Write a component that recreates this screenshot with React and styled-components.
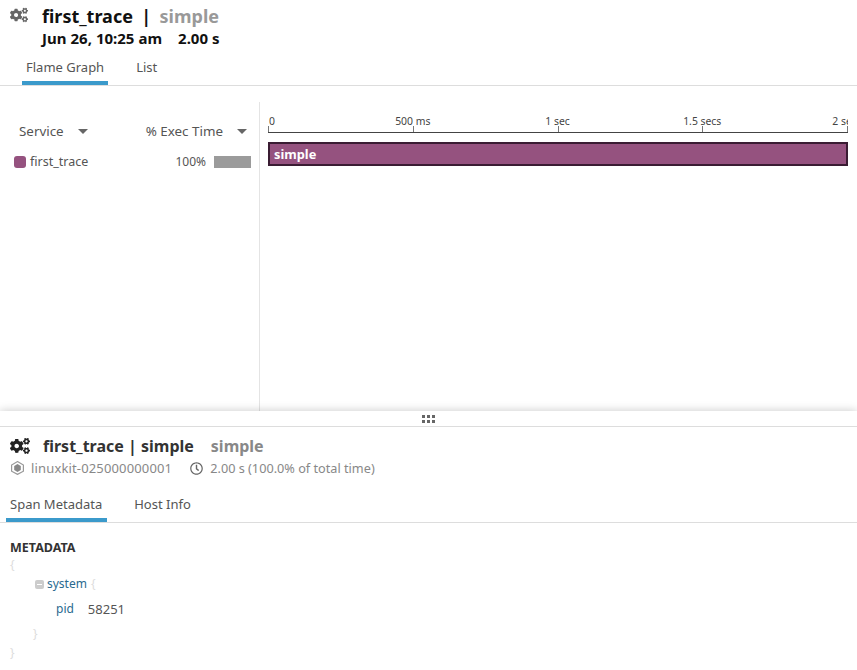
import React from 'react';
import styled, { createGlobalStyle } from 'styled-components';
import { FaCogs, FaRegClock } from 'react-icons/fa';

const GlobalStyle = createGlobalStyle`
    html, body { margin: 0; padding: 0; background: #fff; }
    body { font-family: "Noto Sans", "Open Sans", sans-serif; color: #333; overflow: hidden; }
`;

const Page = styled.div`
    width: 857px;
    height: 670px;
    display: flex;
    flex-direction: column;
    overflow: hidden;
`;
const Header = styled.header`
    height: 85px;
    flex: none;
    border-bottom: 1px solid #ddd;
    display: flex;
    flex-direction: column;
`;
const TitleBlock = styled.div`
    display: flex;
    padding: 6px 0 0 10px;
    height: 47px;
    box-sizing: border-box;
`;
const TopCogs = styled(FaCogs)`
    width: 18px;
    height: 18px;
    margin: 0 14px 0 0;
    color: #666;
    flex: none;
`;
const Titles = styled.div`
    display: flex;
    flex-direction: column;
`;
const TraceName = styled.div`
    font-size: 18px;
    line-height: 20px;
    font-weight: 700;
    color: #111;
    white-space: pre;
    word-spacing: -0.5px;
`;
const Muted = styled.span`
    color: #999;
`;
const TraceMeta = styled.div`
    font-size: 15px;
    line-height: 20px;
    margin-top: 2px;
    font-weight: 700;
    color: #111;
    white-space: pre;
    word-spacing: 0.1px;
`;
const Tabs = styled.nav`
    display: flex;
    padding-left: ${(p) => p.$inset}px;
    gap: ${(p) => p.$gap}px;
    margin-top: auto;
`;
const Tab = styled.div`
    font-size: 13px;
    line-height: 18px;
    height: 18px;
    color: #555;
    padding: 0 ${(p) => p.$padRight || 4}px 5px 4px;
    border-bottom: 4px solid ${(p) => (p.$active ? '#3b9acb' : 'transparent')};
`;
const Body = styled.section`
    flex: 1;
    display: flex;
    padding-top: 16px;
    overflow: hidden;
`;
const Sidebar = styled.aside`
    width: 259px;
    flex: none;
    border-right: 1px solid #e4e4e4;
    padding-top: 19px;
`;
const SideHead = styled.div`
    display: flex;
    align-items: center;
    height: 20px;
    font-size: 13.4px;
    color: #555;
    padding-left: 19px;
`;
const Caret = styled.span`
    width: 0;
    height: 0;
    border-left: 5px solid transparent;
    border-right: 5px solid transparent;
    border-top: 5px solid #666;
    margin-left: ${(p) => p.$gap}px;
`;
const ExecHead = styled.span`
    margin-left: ${(p) => p.$gap}px;
`;
const ServiceRow = styled.div`
    display: flex;
    align-items: center;
    height: 20px;
    margin-top: 10px;
    padding-left: 14px;
    font-size: 12.5px;
    color: #555;
`;
const Swatch = styled.span`
    width: 12px;
    height: 12px;
    border-radius: 3px;
    background: #95527f;
    margin: 2px 4px 0 0;
`;
const Percent = styled.span`
    margin-left: auto;
    margin-right: 8px;
    font-size: 12px;
`;
const ExecBar = styled.span`
    width: 37px;
    height: 12px;
    background: #9b9b9b;
    margin: 2px 8px 0 0;
`;
const Timeline = styled.div`
    flex: 1;
    padding: 10px 0 0 8px;
    overflow: hidden;
`;
const Ruler = styled.div`
    display: grid;
    grid-template-columns: repeat(5, 144.75px);
    width: 580px;
    height: 20px;
    border-bottom: 1px solid #444;
    overflow: hidden;
`;
const Tick = styled.div`
    display: flex;
    flex-direction: column;
    height: 20px;
    width: 0;
    position: relative;
    &::after {
        content: '';
        position: absolute;
        left: 0;
        bottom: 0;
        height: 6px;
        border-left: 1px solid #777;
    }
`;
const TickLabel = styled.span`
    font-size: 10.4px;
    line-height: 14px;
    margin-top: 2px;
    color: #444;
    white-space: nowrap;
    transform: ${(p) => (p.$first ? 'translateX(1px)' : 'translateX(-50%)')};
    width: max-content;
`;
const Span = styled.div`
    width: 580px;
    height: 24px;
    margin-top: 9px;
    box-sizing: border-box;
    background: #95527f;
    border: 2px solid #3a1c33;
    color: #fff;
    font-size: 12.8px;
    font-weight: 700;
    line-height: 20px;
    padding-left: 4px;
`;
const Detail = styled.section`
    height: 259px;
    flex: none;
    background: #fff;
    box-shadow: 0 0 9px rgba(0, 0, 0, 0.22);
    position: relative;
    display: flex;
    flex-direction: column;
`;
const Handle = styled.div`
    height: 15px;
    flex: none;
    border-bottom: 1px solid #ddd;
    display: flex;
    align-items: center;
    justify-content: center;
`;
const HandleDots = styled.div`
    display: grid;
    grid-template-columns: repeat(3, 3px);
    gap: 2px;
`;
const Dot = styled.span`
    width: 3px;
    height: 3px;
    background: #666;
`;
const SpanTitle = styled.div`
    display: flex;
    align-items: center;
    padding: 8px 0 0 10px;
    height: 22px;
`;
const DetailCogs = styled(FaCogs)`
    width: 20px;
    height: 20px;
    color: #222;
    margin-right: 13px;
    flex: none;
`;
const SpanName = styled.span`
    font-size: 16px;
    font-weight: 700;
    color: #333;
`;
const SpanResource = styled.span`
    font-size: 16px;
    font-weight: 700;
    color: #888;
    margin-left: 17px;
`;
const InfoRow = styled.div`
    display: flex;
    align-items: center;
    height: 18px;
    margin-top: 2px;
    padding-left: 11px;
    font-size: 12.7px;
    color: #888;
`;
const HostName = styled.span`
    font-size: 13px;
    letter-spacing: 0.15px;
`;
const HexIcon = styled.svg`
    width: 13px;
    height: 14px;
    margin-right: 7px;
    flex: none;
`;
const ClockIcon = styled(FaRegClock)`
    width: 13px;
    height: 13px;
    color: #666;
    margin: 0 7px 0 18px;
    flex: none;
`;
const DetailTabs = styled(Tabs)`
    margin-top: 18px;
    border-bottom: 1px solid #ddd;
`;
const Meta = styled.div`
    padding: 16px 0 0 10px;
`;
const MetaTitle = styled.div`
    font-size: 12.5px;
    line-height: 18px;
    font-weight: 700;
    color: #333;
`;
const Brace = styled.div`
    font-size: 12px;
    line-height: 18px;
    color: #ddd;
    padding-left: ${(p) => p.$indent || 0}px;
    margin-top: ${(p) => p.$top || 0}px;
`;
const JsonRow = styled.div`
    display: flex;
    align-items: center;
    font-size: 12px;
    line-height: 18px;
    padding-left: ${(p) => p.$indent}px;
    margin-top: ${(p) => p.$top}px;
`;
const Toggle = styled.span`
    width: 9px;
    height: 9px;
    border-radius: 2px;
    background: #ccc;
    margin-right: 3px;
    display: flex;
    align-items: center;
    justify-content: center;
    &::before {
        content: '';
        width: 5px;
        height: 1px;
        background: #fff;
    }
`;
const JsonKey = styled.span`
    color: #2a6a8f;
`;
const JsonValue = styled.span`
    color: #555;
    font-size: 13px;
    margin-left: 14px;
`;
const OpenBrace = styled.span`
    color: #ddd;
    margin-left: 4px;
`;

const ticks = ['0', '500 ms', '1 sec', '1.5 secs', '2 secs'];

const App = () => (
    <Page>
        <GlobalStyle />
        <Header>
            <TitleBlock>
                <TopCogs />
                <Titles>
                    <TraceName>first_trace  |  <Muted>simple</Muted></TraceName>
                    <TraceMeta>Jun 26, 10:25 am    2.00 s</TraceMeta>
                </Titles>
            </TitleBlock>
            <Tabs $inset={22} $gap={24}>
                <Tab $active>Flame Graph</Tab>
                <Tab>List</Tab>
            </Tabs>
        </Header>
        <Body>
            <Sidebar>
                <SideHead>
                    Service
                    <Caret $gap={14} />
                    <ExecHead $gap={58}>% Exec Time</ExecHead>
                    <Caret $gap={14} />
                </SideHead>
                <ServiceRow>
                    <Swatch />
                    first_trace
                    <Percent>100%</Percent>
                    <ExecBar />
                </ServiceRow>
            </Sidebar>
            <Timeline>
                <Ruler>
                    {ticks.map((t, i) => (
                        <Tick key={t}>
                            <TickLabel $first={i === 0}>{t}</TickLabel>
                        </Tick>
                    ))}
                </Ruler>
                <Span>simple</Span>
            </Timeline>
        </Body>
        <Detail>
            <Handle>
                <HandleDots>
                    {[0, 1, 2, 3, 4, 5].map((d) => <Dot key={d} />)}
                </HandleDots>
            </Handle>
            <SpanTitle>
                <DetailCogs />
                <SpanName>first_trace | simple</SpanName>
                <SpanResource>simple</SpanResource>
            </SpanTitle>
            <InfoRow>
                <HexIcon viewBox="0 0 13 14">
                    <path d="M6.5 .6 12.400 4v6.200L6.500 13.400 .6 10.200V4z" fill="none" stroke="#999" strokeWidth="1.200" />
                    <path d="M6.500 3 9.800 4.900v4.200L6.500 11 3.200 9.100V4.900z" fill="#888" />
                </HexIcon>
                <HostName>linuxkit-025000000001</HostName>
                <ClockIcon />
                2.00 s (100.0% of total time)
            </InfoRow>
            <DetailTabs $inset={6} $gap={23}>
                <Tab $active $padRight={5}>Span Metadata</Tab>
                <Tab>Host Info</Tab>
            </DetailTabs>
            <Meta>
                <MetaTitle>METADATA</MetaTitle>
                <Brace $top={-1}>{'{'}</Brace>
                <JsonRow $indent={25} $top={1}>
                    <Toggle />
                    <JsonKey>system</JsonKey>
                    <OpenBrace>{'{'}</OpenBrace>
                </JsonRow>
                <JsonRow $indent={46} $top={7}>
                    <JsonKey>pid</JsonKey>
                    <JsonValue>58251</JsonValue>
                </JsonRow>
                <Brace $indent={23} $top={7}>{'}'}</Brace>
                <Brace $top={1}>{'}'}</Brace>
            </Meta>
        </Detail>
    </Page>
);

export default App;
